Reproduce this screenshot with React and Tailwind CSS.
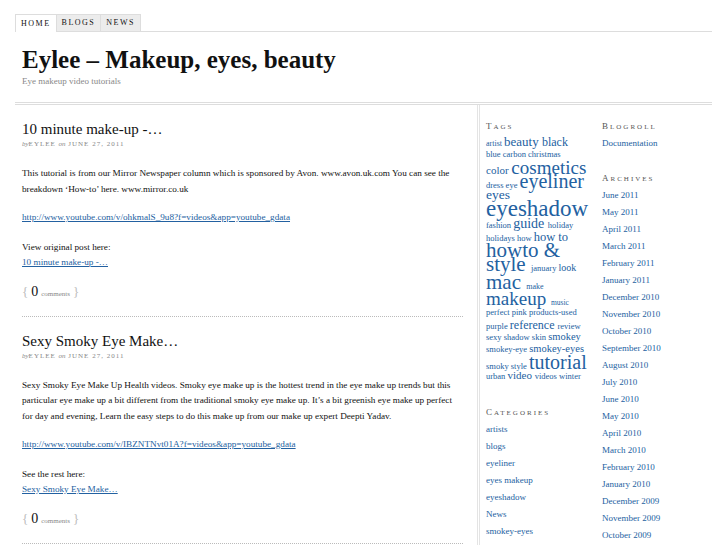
const archives = [
  "June 2011", "May 2011", "April 2011", "March 2011", "February 2011", "January 2011",
  "December 2010", "November 2010", "October 2010", "September 2010", "August 2010",
  "July 2010", "June 2010", "May 2010", "April 2010", "March 2010", "February 2010",
  "January 2010", "December 2009", "November 2009", "October 2009",
];

const categories = ["artists", "blogs", "eyeliner", "eyes makeup", "eyeshadow", "News", "smokey-eyes", "tutorial"];

// tag cloud, one entry per rendered line: [height class, [[word, size class], ...]]
const tagLines = [
  ["h-[13px] leading-[13px]", [["artist", "text-[8px]"], ["beauty", "text-[13px]"], ["black", "text-[12px]"]]],
  ["h-[13px] leading-[13px]", [["blue", "text-[8.5px]"], ["carbon", "text-[8.5px]"], ["christmas", "text-[8.5px]"]]],
  ["h-[13px] leading-[13px]", [["color", "text-[11px]"], ["cosmetics", "text-[19px]"]]],
  ["h-[15px] leading-[15px]", [["dress", "text-[8.5px]"], ["eye", "text-[8.5px]"], ["eyeliner", "text-[20px]"]]],
  ["h-[12px] leading-[12px]", [["eyes", "text-[13.5px]"]]],
  ["h-[16px] leading-[16px]", [["eyeshadow", "text-[23px]"]]],
  ["h-[14px] leading-[14px]", [["fashion", "text-[8.5px]"], ["guide", "text-[14px]"], ["holiday", "text-[8.5px]"]]],
  ["h-[13px] leading-[13px]", [["holidays", "text-[8.5px]"], ["how", "text-[8.5px]"], ["how to", "text-[12.5px]"]]],
  ["h-[12px] leading-[12px]", [["howto &", "text-[21px]"]]],
  ["h-[17px] leading-[17px]", [["style", "text-[21px]"], ["january", "text-[8.5px]"], ["look", "text-[10px]"]]],
  ["h-[18px] leading-[18px]", [["mac", "text-[21px]"], ["make", "text-[8px]"]]],
  ["h-[15px] leading-[15px]", [["makeup", "text-[19px]"], ["music", "text-[7.5px]"]]],
  ["h-[13px] leading-[13px]", [["perfect", "text-[8.5px]"], ["pink", "text-[8.5px]"], ["products-used", "text-[8.5px]"]]],
  ["h-[12px] leading-[12px]", [["purple", "text-[8.5px]"], ["reference", "text-[12px]"], ["review", "text-[8.5px]"]]],
  ["h-[12px] leading-[12px]", [["sexy", "text-[8.5px]"], ["shadow", "text-[8.5px]"], ["skin", "text-[8.5px]"], ["smokey", "text-[10.5px]"]]],
  ["h-[12px] leading-[12px]", [["smokey-eye", "text-[8.5px]"], ["smokey-eyes", "text-[10.5px]"]]],
  ["h-[14px] leading-[14px]", [["smoky", "text-[8.5px]"], ["style", "text-[8.5px]"], ["tutorial", "text-[20px]"]]],
  ["h-[13px] leading-[13px]", [["urban", "text-[8.5px]"], ["video", "text-[11px]"], ["videos", "text-[8.5px]"], ["winter", "text-[8.5px]"]]],
];

const WidgetTitle = ({ children, className = "" }) => (
  <h3 className={`text-[7px] leading-[10px] uppercase tracking-[2px] text-[#555] ${className}`}>
    <span className="text-[9px]">{children[0]}</span>
    {children.slice(1)}
  </h3>
);

const Comments = () => (
  <div className="flex items-baseline gap-[3px] text-[#bbb] leading-[16px]">
    <span className="text-[13px]">{"{"}</span>
    <span className="text-[14px] text-[#111]">0</span>
    <span className="text-[7px] text-[#888]">comments</span>
    <span className="text-[13px]">{"}"}</span>
  </div>
);

const Post = ({ title, body, link, moreLabel, moreLink }) => (
  <div className="pt-[15px] pb-[14px] border-b border-dotted border-[#bbb] mr-[14px]">
    <h2 className="text-[15px] leading-[19px] text-[#111]">{title}</h2>
    <div className="text-[7px] text-[#888] tracking-[1px] uppercase leading-[10px]">
      <span className="italic normal-case tracking-normal">by</span>EYLEE{" "}
      <span className="italic normal-case tracking-normal">on</span> JUNE 27, 2011
    </div>
    <p className="mt-[17px] text-[9.2px] leading-[15.5px] text-[#111]">{body}</p>
    <p className="mt-[13px] text-[9.2px] leading-[15.5px]">
      <a className="text-[#2361a1] underline">{link}</a>
    </p>
    <p className="mt-[14px] text-[9.2px] leading-[15.5px] text-[#111]">
      {moreLabel}
      <br />
      <a className="text-[#2361a1] underline">{moreLink}</a>
    </p>
    <div className="mt-[13px]">
      <Comments />
    </div>
  </div>
);

export default function App() {
  return (
    <div className="min-h-[545px] bg-white font-['Liberation_Serif',serif] text-[#111] overflow-hidden">
      <div className="mx-[15px] pt-[14px]">
        <div className="flex border-b border-[#ddd]">
          <div className="px-[5px] h-[18px] flex items-center border border-[#ddd] border-b-0 bg-white text-[8px] tracking-[1.5px] text-[#111] -mb-px">
            HOME
          </div>
          <div className="px-[5px] h-[17px] flex items-center border-t border-r border-[#ddd] bg-[#ececec] text-[8px] tracking-[1.5px] text-[#111]">
            BLOGS
          </div>
          <div className="px-[5px] h-[17px] flex items-center border-t border-r border-[#ddd] bg-[#ececec] text-[8px] tracking-[1.5px] text-[#111]">
            NEWS
          </div>
        </div>

        <div className="px-[7px] pt-[13px] pb-[15px] border-b-[3px] border-double border-[#ddd]">
          <h1 className="text-[25px] font-bold leading-[30px] text-[#111]">Eylee – Makeup, eyes, beauty</h1>
          <p className="mt-[1px] text-[9px] text-[#888] leading-[11px]">Eye makeup video tutorials</p>
        </div>

        <div className="flex">
          <div className="w-[462px] pl-[7px]">
            <Post
              title="10 minute make-up -…"
              body="This tutorial is from our Mirror Newspaper column which is sponsored by Avon. www.avon.uk.com You can see the breakdown ‘How-to’ here. www.mirror.co.uk"
              link="http://www.youtube.com/v/ohkmalS_9u8?f=videos&app=youtube_gdata"
              moreLabel="View original post here:"
              moreLink="10 minute make-up -…"
            />
            <Post
              title="Sexy Smoky Eye Make…"
              body="Sexy Smoky Eye Make Up Health videos. Smoky eye make up is the hottest trend in the eye make up trends but this particular eye make up a bit different from the traditional smoky eye make up. It’s a bit greenish eye make up perfect for day and evening, Learn the easy steps to do this make up from our make up expert Deepti Yadav."
              link="http://www.youtube.com/v/IBZNTNvt01A?f=videos&app=youtube_gdata"
              moreLabel="See the rest here:"
              moreLink="Sexy Smoky Eye Make…"
            />
          </div>

          <div className="flex-1 border-l-[3px] border-double border-[#e4e4e4] flex pl-[6px] pt-[16px]">
            <div className="w-[110px]">
              <WidgetTitle className="mb-[3px]">Tags</WidgetTitle>
              <div className="text-[8px] text-[#2361a1]">
                {tagLines.map(([h, words], i) => (
                  <div key={i} className={`${h} whitespace-nowrap`}>
                    {words.map(([w, s], j) => (
                      <span key={j} className={s}>
                        {w}
                        {j < words.length - 1 ? " " : ""}
                      </span>
                    ))}
                  </div>
                ))}
              </div>

              <WidgetTitle className="mt-[25px] mb-[3px]">Categories</WidgetTitle>
              <ul className="text-[9px] text-[#2361a1]">
                {categories.map((c) => (
                  <li key={c} className="leading-[17px]">{c}</li>
                ))}
              </ul>
            </div>

            <div className="ml-[6px] flex-1">
              <WidgetTitle className="mb-[3px]">Blogroll</WidgetTitle>
              <div className="text-[9px] text-[#2361a1] leading-[17px]">Documentation</div>

              <WidgetTitle className="mt-[21px] mb-[3px]">Archives</WidgetTitle>
              <ul className="text-[9px] text-[#2361a1]">
                {archives.map((a) => (
                  <li key={a} className="leading-[17px]">{a}</li>
                ))}
              </ul>
            </div>
          </div>
        </div>
      </div>
    </div>
  );
}
